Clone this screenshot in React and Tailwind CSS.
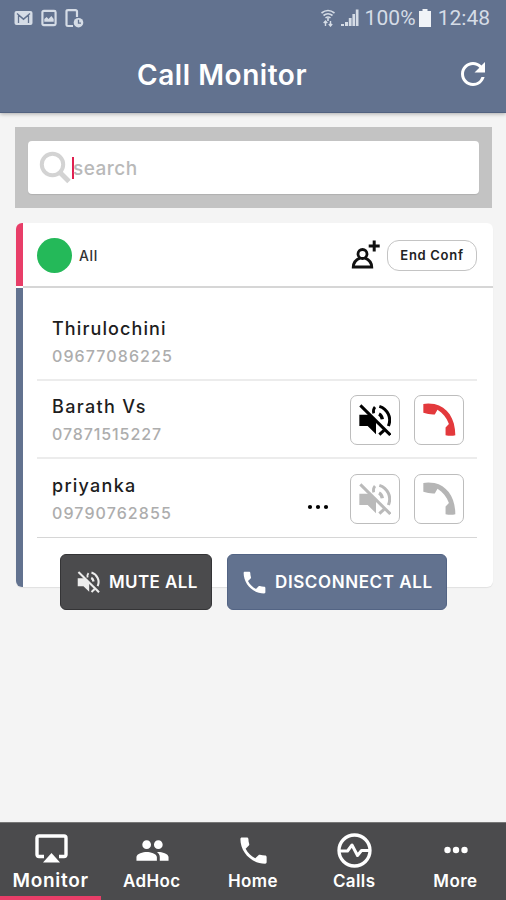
import React from "react";
import { MdPeople, MdPhone, MdRefresh } from "react-icons/md";

function MuteIcon({ className }) {
  return (
    <svg viewBox="0 0 96 96" className={className} fill="none" stroke="currentColor">
      <path d="M1 32H30L51 53V91L26 66H1Z" fill="currentColor" stroke="none" />
      <path d="M4 4L94 93" strokeWidth="9" />
      <path d="M61 7C86 15 99 42 88 66" strokeWidth="9" />
      <path d="M48 9Q41 17 44 28" strokeWidth="8" />
      <path d="M60 30Q68 34 70 46" strokeWidth="10" />
      <path d="M61 92L75 79" strokeWidth="9" />
    </svg>
  );
}

function HangupIcon({ className }) {
  return (
    <svg viewBox="0 0 98 98" className={className} fill="currentColor">
      <path d="M1 3Q14 0 34 3C72 12 96 45 96 96Q83 99 67 96V73L77 62C70 43 59 30 43 20L35 34Q18 35 1 29Z" />
    </svg>
  );
}

function AddPersonIcon() {
  return (
    <svg viewBox="0 0 30 30" className="h-[30px] w-[30px]" fill="none" stroke="#111">
      <circle cx="11.500" cy="14" r="4.500" strokeWidth="2.800" />
      <path d="M8.800 18.200C4.500 20 2.500 22.500 2.300 27H20.700C20.500 22.500 18.500 20 14.200 18.200" strokeWidth="2.900" />
      <path d="M23.200 0.500V11.500M17.700 6H28.700" strokeWidth="3" />
    </svg>
  );
}

function StatusBar() {
  return (
    <div className="flex h-9 items-center justify-between pl-[14px] pr-[16px] text-[#d5dce6]">
      <div className="flex items-center gap-2">
        <svg viewBox="0 0 19 14" className="h-[14px] w-[19px]">
          <rect x="0.500" width="18" height="14" rx="2" fill="currentColor" />
          <path d="M4.500 12V4L9.500 8.500L14.500 4V12M3 2.500L9.500 8L16 2.500" fill="none" stroke="#62728f" strokeWidth="1.300" />
        </svg>
        <svg viewBox="0 0 17 18" className="h-[18px] w-[16px]">
          <rect x="1.500" y="1.500" width="14" height="15" rx="1.500" fill="none" stroke="currentColor" strokeWidth="2.300" />
          <path d="M3.500 13V10L6 8L8 10L11 7L13.500 10V13Z" fill="currentColor" />
        </svg>
        <svg viewBox="0 0 19 19" className="h-[19px] w-[19px]">
          <path d="M12 8V2.500Q12 1.200 10.500 1.200H3Q1.500 1.200 1.500 2.500V16Q1.500 17 3 17H8" fill="none" stroke="currentColor" strokeWidth="2.200" />
          <circle cx="13.500" cy="13.700" r="4.800" fill="currentColor" />
          <path d="M13.500 10.800V14.200H16" fill="none" stroke="#62728f" strokeWidth="1.300" />
        </svg>
      </div>
      <div className="flex items-center font-[Roboto] text-[21px] leading-none">
        <svg viewBox="0 0 14 18" className="mr-[6px] h-[18px] w-[14px]" fill="none" stroke="currentColor">
          <path d="M0.500 4Q7-1 13.500 4M2.500 6.500Q7 3 11.500 6.500M4.500 9Q7 7 9.500 9M7 9V12" strokeWidth="1.600" />
          <path d="M4.500 17V12M2.700 14L4.500 12L6.300 14M9.500 12V17M7.800 15L9.500 17L11.200 15" strokeWidth="1.400" />
        </svg>
        <svg viewBox="0 0 18 18" className="mr-[6px] h-[18px] w-[18px]" fill="currentColor">
          <path d="M0 15H3V17H0ZM4 13H7V17H4ZM7.800 9H10.600V17H7.800ZM11.400 5H14V17H11.400ZM14.800 0.500H17.500V17H14.800Z" />
        </svg>
        <span className="tracking-[0.1px]">100%</span>
        <svg viewBox="0 0 12 18" className="ml-[3px] mr-[7px] h-[18px] w-[12px]" fill="#f0f3f7">
          <path d="M3.500 0H8.500V2H12V18H0V2H3.500Z" />
        </svg>
        <span className="tracking-[0px]">12:48</span>
      </div>
    </div>
  );
}

function CallActions({ active }) {
  return (
    <div className="flex gap-[14px]">
      <button className="flex h-[50px] w-[50px] items-center justify-center rounded-[7px] border-[1.5px] border-[#bdbdbd]">
        <MuteIcon className={active ? "h-8 w-8 text-black" : "h-8 w-8 text-[#bababa]"} />
      </button>
      <button className="flex h-[50px] w-[50px] items-center justify-center rounded-[7px] border-[1.5px] border-[#bdbdbd]">
        <HangupIcon className={active ? "h-[33px] w-[33px] text-[#e3393c]" : "h-[33px] w-[33px] text-[#b5b5b5]"} />
      </button>
    </div>
  );
}

function Participant({ name, nameClass, phone, phoneClass, rowClass, children }) {
  return (
    <div className={"flex items-center justify-between pl-[15px] pr-[13px] " + rowClass}>
      <div className="pt-[2px] whitespace-nowrap">
        <div className={"text-[18px] leading-[27px] font-medium text-[#1d1d1d] " + nameClass}>{name}</div>
        <div className={"text-[16px] leading-[28px] font-medium text-[#adadad] " + phoneClass}>{phone}</div>
      </div>
      {children}
    </div>
  );
}

function Tab({ label, labelClass, active, children }) {
  return (
    <div className={"flex w-[101.2px] flex-col items-center border-b-4 pt-[9px] " + (active ? "border-[#e83e68]" : "border-transparent")}>
      <div className="flex h-[36px] items-center pl-px">{children}</div>
      <div className={"leading-[26px] font-semibold whitespace-nowrap " + labelClass}>{label}</div>
    </div>
  );
}

export default function App() {
  return (
    <div className="flex h-[900px] w-[506px] flex-col overflow-hidden bg-[#f4f4f4] font-['Inter',sans-serif]">
      <header className="h-[113px] shrink-0 border-b border-[#526280] bg-[#62728f] shadow-[0_1px_4px_rgba(0,0,0,0.3)]">
        <StatusBar />
        <div className="flex h-[76px] items-center justify-between pl-[137px] pr-[15px] text-white">
          <h1 className="pt-px text-[28px] leading-none font-semibold tracking-[0.55px] whitespace-nowrap">Call Monitor</h1>
          <MdRefresh className="h-9 w-9" />
        </div>
      </header>

      <div className="mt-[14px] mr-[14px] ml-[15px] h-[81px] shrink-0 bg-[#c3c3c3] px-[13px] py-[14px]">
        <div className="flex h-[53px] items-center rounded-[4px] bg-white pl-[11px] shadow-[0_1px_1px_rgba(0,0,0,0.1)]">
          <svg viewBox="0 0 33 33" className="h-[33px] w-[33px]" fill="none" stroke="#d3d3d3">
            <circle cx="13.500" cy="13.500" r="10.700" strokeWidth="4" />
            <path d="M21.500 22L30 30.500" strokeWidth="5" />
          </svg>
          <div className="h-[22px] w-[2px] bg-[#e0204f]" />
          <span className="-ml-px pt-[3px] text-[19px] font-medium tracking-[0.5px] text-[#b9b9b9]">search</span>
        </div>
      </div>

      <section className="mt-[15px] mr-[13px] ml-4 h-[364px] shrink-0 overflow-hidden rounded-[6px] bg-white shadow-[0_1px_1px_rgba(0,0,0,0.08)]">
        <div className="flex h-[63px] items-center border-l-[7px] border-[#e83e68] pr-4 pl-[14px]">
          <div className="mt-[2px] h-[35px] w-[35px] rounded-full bg-[#24b959]" />
          <span className="mt-[2px] ml-[7px] text-[14px] font-medium tracking-[0.6px] text-[#333]">All</span>
          <div className="mt-px ml-auto flex items-center gap-[6px]">
            <AddPersonIcon />
            <button className="h-[31px] w-[90px] rounded-[12px] border-[1.5px] border-[#c4c4c4] pt-[2px] text-[13px] font-semibold tracking-[0.7px] whitespace-nowrap text-[#222]">End Conf</button>
          </div>
        </div>
        <div className="ml-[7px] h-[2px] bg-[#d6d6d6]" />
        <div className="h-[299px] border-l-[7px] border-[#62728f] pr-4 pl-[14px]">
          <Participant name="Thirulochini" nameClass="tracking-[1.1px]" phone="09677086225" phoneClass="tracking-[1.1px]" rowClass="h-[93px] border-b-2 border-[#ececec] pt-[16px]" />
          <Participant name="Barath Vs" nameClass="tracking-[1.35px]" phone="07871515227" phoneClass="tracking-[0.9px]" rowClass="h-[78px] border-b-2 border-[#ececec] pt-px">
            <CallActions active />
          </Participant>
          <Participant name="priyanka" nameClass="tracking-[1.25px]" phone="09790762855" phoneClass="tracking-[1.1px]" rowClass="h-[79px] border-b border-[#d6d6d6] pt-px">
            <div className="flex items-center">
              <svg viewBox="0 0 22 6" className="mt-[16px] mr-[21px] h-[6px] w-[22px]">
                <circle cx="3" cy="3" r="2.100" />
                <circle cx="11" cy="3" r="2.100" />
                <circle cx="19" cy="3" r="2.100" />
              </svg>
              <CallActions />
            </div>
          </Participant>
        </div>
      </section>

      <div className="z-10 mt-[-33px] ml-[60px] flex shrink-0 gap-[15px] text-white">
        <button className="flex h-[56px] w-[152px] items-center rounded-[6px] border border-[#343436] bg-[#4b4b4d] pl-[16px] text-[17px] font-semibold whitespace-nowrap">
          <MuteIcon className="mr-[9px] h-[22px] w-[23px] text-[#ededed]" />
          <span className="pt-[2px] tracking-[0.4px]">MUTE ALL</span>
        </button>
        <button className="flex h-[56px] w-[220px] items-center rounded-[6px] border border-[#536484] bg-[#62728f] pl-[12px] text-[17px] font-semibold whitespace-nowrap">
          <MdPhone className="mr-[6px] h-[29px] w-[29px]" />
          <span className="pt-[2px] tracking-[0.6px]">DISCONNECT ALL</span>
        </button>
      </div>

      <nav className="mt-auto flex h-[78px] shrink-0 border-t border-[#777] bg-[#4b4b4d] text-white">
        <Tab label="Monitor" labelClass="text-[19px] tracking-[0.7px]" active>
          <svg viewBox="0 0 33 29" className="mt-[-4px] h-[29px] w-[33px]" fill="none" stroke="currentColor">
            <path d="M9 22.500H4Q2 22.500 2 20.500V4Q2 2 4 2H29Q31 2 31 4V20.500Q31 22.500 29 22.500H24" strokeWidth="3.400" />
            <path d="M8 28.500L16.500 19L25 28.500Z" fill="currentColor" stroke="none" />
          </svg>
        </Tab>
        <Tab label="AdHoc" labelClass="text-[17px] tracking-[0.4px]"><MdPeople className="h-[35px] w-[35px]" /></Tab>
        <Tab label="Home" labelClass="text-[17px] tracking-[0.4px]"><MdPhone className="h-[35px] w-[35px]" /></Tab>
        <Tab label="Calls" labelClass="text-[17px] tracking-[0.4px]">
          <svg viewBox="0 0 35 35" className="h-[35px] w-[35px]" fill="none" stroke="currentColor">
            <circle cx="17.500" cy="17.500" r="15.500" strokeWidth="3.300" />
            <path d="M2 18H10.500L15 12L20.500 22.500L24.500 17.500H33" strokeWidth="3" strokeLinejoin="round" />
          </svg>
        </Tab>
        <Tab label="More" labelClass="text-[17px] tracking-[0.4px]">
          <svg viewBox="0 0 24 8" className="h-[8px] w-[24px]" fill="currentColor">
            <circle cx="3.500" cy="4" r="3.200" />
            <circle cx="12" cy="4" r="3.200" />
            <circle cx="20.500" cy="4" r="3.200" />
          </svg>
        </Tab>
      </nav>
    </div>
  );
}
